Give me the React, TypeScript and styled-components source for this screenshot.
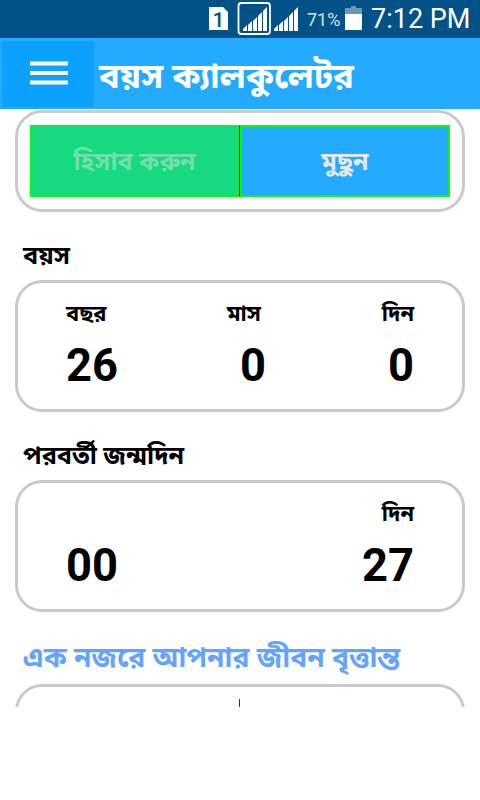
import React from "react";
import styled, { createGlobalStyle } from "styled-components";

const GlobalStyle = createGlobalStyle`
  * { box-sizing: border-box; }
  body { margin: 0; background: #fff; }
  button { font: inherit; padding: 0; margin: 0; border: 0; }
`;

const bengali = `"Noto Sans Bengali", "Noto Sans", sans-serif`;

const Screen = styled.div`
  width: 480px;
  height: 800px;
  overflow: hidden;
  display: flex;
  flex-direction: column;
  background: #fff;
  color: #000;
  font-family: ${bengali};
  font-weight: 700;
  white-space: nowrap;
`;

const StatusBar = styled.div`
  flex: none;
  height: 38px;
  padding-left: 209px;
  display: flex;
  align-items: flex-start;
  background: #025287;
  color: #fff;
  font-family: Roboto, sans-serif;
`;

const StatusIcons = styled.svg`
  display: block;
  flex: none;
  width: 91px;
  height: 38px;
`;

const Percent = styled.span`
  width: 38px;
  margin-left: 7px;
  font-size: 18px;
  font-weight: 400;
  line-height: 39px;
  color: #d5e5f0;
`;

const Battery = styled.svg`
  display: block;
  flex: none;
  width: 17px;
  height: 38px;
`;

const Clock = styled.span`
  margin-left: 9px;
  font-size: 27px;
  font-weight: 400;
  line-height: 38px;
`;

const AppBar = styled.header`
  flex: none;
  height: 71px;
  display: flex;
  align-items: flex-start;
  padding: 3px 0 0 2px;
  background: #24abff;
  color: #fff;
`;

const MenuButton = styled.button`
  width: 92px;
  height: 66px;
  display: flex;
  flex-direction: column;
  align-items: center;
  justify-content: center;
  border-radius: 2px;
  background: #0aa1ff;
`;

const MenuIcon = styled.svg`
  display: block;
  width: 38px;
  height: 24px;
  margin: -2px 0 0 1px;
`;

const Title = styled.h1`
  margin: 0 0 0 5px;
  font-size: 34.5px;
  font-weight: 700;
  line-height: 76px;
`;

const Content = styled.main`
  flex: none;
  height: 598px;
  padding: 1px 15px 0;
  overflow: hidden;
`;

const Card = styled.section<{ $height: number }>`
  height: ${(p) => p.$height}px;
  border: 3px solid #cacaca;
  border-radius: 27px;
`;

const Actions = styled.div`
  height: 72px;
  margin: 12px;
  display: grid;
  grid-template-columns: 209px 1px 210px;
  background: #00ff00;
`;

const Action = styled.button<{ $pressed?: boolean }>`
  border: ${(p) => (p.$pressed ? "1px" : "2px")} solid #00ff00;
  box-shadow: ${(p) => (p.$pressed ? "inset 0 0 0 1px #0ce858" : "none")};
  background: ${(p) => (p.$pressed ? "#16d982" : "#24abff")};
  color: ${(p) => (p.$pressed ? "#6fe0ab" : "#e9e9e9")};
  font-size: 25px;
  line-height: 58px;
  display: flex;
  justify-content: center;
  padding-top: ${(p) => (p.$pressed ? "9px" : "8px")};
`;

const Divider = styled.i`
  margin: 1px 0;
  background: #000;
`;

const Heading = styled.h2<{ $accent?: boolean }>`
  height: ${(p) => (p.$accent ? 72 : 68)}px;
  margin: 0 0 0 8px;
  font-size: ${(p) => (p.$accent ? 28.15 : 25.2)}px;
  font-weight: 700;
  line-height: ${(p) => (p.$accent ? 96 : 91)}px;
  color: ${(p) => (p.$accent ? "#66a3ff" : "#000")};
`;

const Stats = styled.div`
  padding: 10px 48px 0;
  display: grid;
  grid-template-columns: 161px 1fr auto;
`;

const Stat = styled.div<{ $end?: boolean }>`
  display: flex;
  flex-direction: column;
  align-items: ${(p) => (p.$end ? "flex-end" : "flex-start")};
`;

const StatLabel = styled.span`
  height: 46px;
  font-size: 21.9px;
  line-height: 46px;
`;

const StatValue = styled.span<{ $indent?: boolean }>`
  margin-left: ${(p) => (p.$indent ? 13 : 0)}px;
  font-family: Roboto, sans-serif;
  font-size: 45.3px;
  line-height: 54px;
`;

const Tick = styled.i`
  display: block;
  width: 1px;
  height: 20px;
  margin: 12px 0 0 221px;
  background: #333;
`;

const bars = [5, 9, 13, 18, 23];

function Signal({ x }: { x: number }) {
  return (
    <g fill="#fff">
      {bars.map((h, i) => (
        <path key={h} d={`M${x + i * 5} 31v${-(h - 3)}l4 -4v${h + 1}z`} />
      ))}
    </g>
  );
}

export default function App() {
  return (
    <Screen>
      <GlobalStyle />
      <StatusBar>
        <StatusIcons viewBox="0 0 91 38">
          <path d="M0 7h14l5 5v18H0z" fill="#fff" />
          <text x="9.5" y="26.5" textAnchor="middle" fontFamily="Roboto" fontSize="21" fontWeight="500" fill="#025287">1</text>
          <rect x="29.5" y="3" width="31.5" height="31" rx="3" fill="none" stroke="#fff" strokeWidth="1.8" />
          <Signal x={34} />
          <Signal x={65} />
        </StatusIcons>
        <Percent>71%</Percent>
        <Battery viewBox="0 0 17 38">
          <path d="M0 8h6V6h5v2h6v6H0z" fill="#6998b8" />
          <path d="M0 14h17v16H0z" fill="#fff" />
        </Battery>
        <Clock>7:12 PM</Clock>
      </StatusBar>
      <AppBar>
        <MenuButton aria-label="মেনু">
          <MenuIcon viewBox="0 0 38 24">
            <path d="M0 2.5h38M0 12h38M0 21.5h38" stroke="#fff" strokeWidth="3.8" />
          </MenuIcon>
        </MenuButton>
        <Title>বয়স ক্যালকুলেটর</Title>
      </AppBar>
      <Content>
        <Card $height={102}>
          <Actions>
            <Action $pressed>হিসাব করুন</Action>
            <Divider />
            <Action>মুছুন</Action>
          </Actions>
        </Card>
        <Heading>বয়স</Heading>
        <Card $height={132}>
          <Stats>
            <Stat><StatLabel>বছর</StatLabel><StatValue>26</StatValue></Stat>
            <Stat><StatLabel>মাস</StatLabel><StatValue $indent>0</StatValue></Stat>
            <Stat $end><StatLabel>দিন</StatLabel><StatValue>0</StatValue></Stat>
          </Stats>
        </Card>
        <Heading>পরবর্তী জন্মদিন</Heading>
        <Card $height={132}>
          <Stats>
            <Stat><StatLabel /><StatValue>00</StatValue></Stat>
            <Stat />
            <Stat $end><StatLabel>দিন</StatLabel><StatValue>27</StatValue></Stat>
          </Stats>
        </Card>
        <Heading $accent>এক নজরে আপনার জীবন বৃত্তান্ত</Heading>
        <Card $height={132}>
          <Tick />
        </Card>
      </Content>
    </Screen>
  );
}
